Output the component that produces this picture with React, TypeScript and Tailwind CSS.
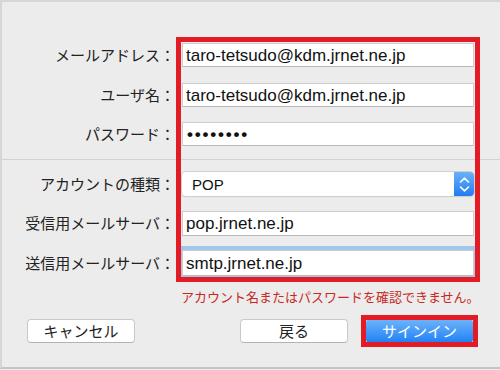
import type { ReactNode } from "react";

const SANS = "font-['Liberation_Sans','Noto_Sans_CJK_JP',sans-serif]";

function Row({ label, children, className = "" }: { label: string; children: ReactNode; className?: string }) {
  return (
    <div className={`flex items-center gap-x-[7px] ${className}`}>
      <div className="w-[173px] whitespace-nowrap text-right text-[15px] leading-none text-[#222]">{label}</div>
      {children}
    </div>
  );
}

function Field({ value, className = "" }: { value: ReactNode; className?: string }) {
  return (
    <div
      className={`flex w-[292px] items-center border border-[#cdcdcd] border-b-[#b9b9b9] bg-white pl-[3px] text-[17px] leading-none text-[#111] ${className}`}
    >
      {value}
    </div>
  );
}

function Stepper() {
  return (
    <div className="flex w-[20px] flex-col items-center justify-center gap-[3px] rounded-r-[4px] bg-gradient-to-b from-[#69b1fa] to-[#1e7cf2]">
      <svg width="11" height="6" viewBox="0 0 11 6" fill="none" stroke="white" strokeWidth="1.6" strokeLinecap="round" strokeLinejoin="round">
        <path d="M1.5 5 L5.5 1.2 L9.5 5" />
      </svg>
      <svg width="11" height="6" viewBox="0 0 11 6" fill="none" stroke="white" strokeWidth="1.6" strokeLinecap="round" strokeLinejoin="round">
        <path d="M1.5 1 L5.5 4.8 L9.5 1" />
      </svg>
    </div>
  );
}

function Button({ children, primary = false, className = "" }: { children: ReactNode; primary?: boolean; className?: string }) {
  return (
    <div
      className={`flex h-[24px] items-center justify-center rounded-[4px] text-[15px] leading-none ${
        primary
          ? "bg-gradient-to-b from-[#6db4fb] to-[#1b80f5] text-white"
          : "border border-[#c9c9c9] border-b-[#b3b3b3] bg-white text-[#222]"
      } ${className}`}
    >
      {children}
    </div>
  );
}

export default function App() {
  return (
    <div className={`relative h-[370px] w-[500px] overflow-hidden bg-[#ececec] ${SANS}`}>
      <div className="flex h-[369px] flex-col border-b-2 border-l-2 border-t-2 border-[#d6d6d6] border-b-[#c4c4c4]">
        {/* account */}
        <div className="flex flex-col pt-[41px]">
          <Row label="メールアドレス：">
            <Field className="h-[24px]" value="taro-tetsudo@kdm.jrnet.ne.jp" />
          </Row>
          <Row label="ユーザ名：" className="mt-[16px]">
            <Field className="h-[24px]" value="taro-tetsudo@kdm.jrnet.ne.jp" />
          </Row>
          <Row label="パスワード：" className="mt-[15px]">
            <Field
              className="h-[24px]"
              value={<span className="pl-[1px] text-[17px] font-bold tracking-[1.8px]">••••••••</span>}
            />
          </Row>
        </div>

        <div className="mt-[13px] h-px bg-[#d2d2d2]" />

        {/* server */}
        <div className="flex flex-col pt-[12px]">
          <Row label="アカウントの種類：">
            <div className="flex h-[24px] w-[292px] rounded-[4px] bg-white shadow-[0_0_0_1px_#d0d0d0,0_1px_1px_rgba(0,0,0,0.2)]">
              <div className="flex flex-1 items-center pl-[10px] text-[15px] leading-none text-[#111]">POP</div>
              <Stepper />
            </div>
          </Row>
          <Row label="受信用メールサーバ：" className="mt-[15px]">
            <Field className="h-[25px]" value="pop.jrnet.ne.jp" />
          </Row>
          <Row label="送信用メールサーバ：" className="mt-[14px]">
            <Field className="h-[26px] shadow-[0_0_0_4px_#a3c6ed]" value="smtp.jrnet.ne.jp" />
          </Row>
        </div>

        <div className="mt-[14px] pl-[179px] text-[13px] leading-[16px] text-[#c9281f]">
          アカウント名またはパスワードを確認できません。
        </div>

        <div className="mt-[13px] flex items-center pl-[25px]">
          <Button className="w-[108px]">キャンセル</Button>
          <Button className="ml-[105px] w-[108px]">戻る</Button>
          <Button primary className="ml-[18px] w-[107px]">サインイン</Button>
        </div>
      </div>

      {/* annotation outlines */}
      <div className="pointer-events-none absolute left-[176px] top-[37px] h-[245px] w-[304px] border-[5px] border-[#e31b24]" />
      <div className="pointer-events-none absolute left-[361px] top-[315px] h-[32px] w-[117px] border-[5px] border-[#e31b24]" />
    </div>
  );
}
